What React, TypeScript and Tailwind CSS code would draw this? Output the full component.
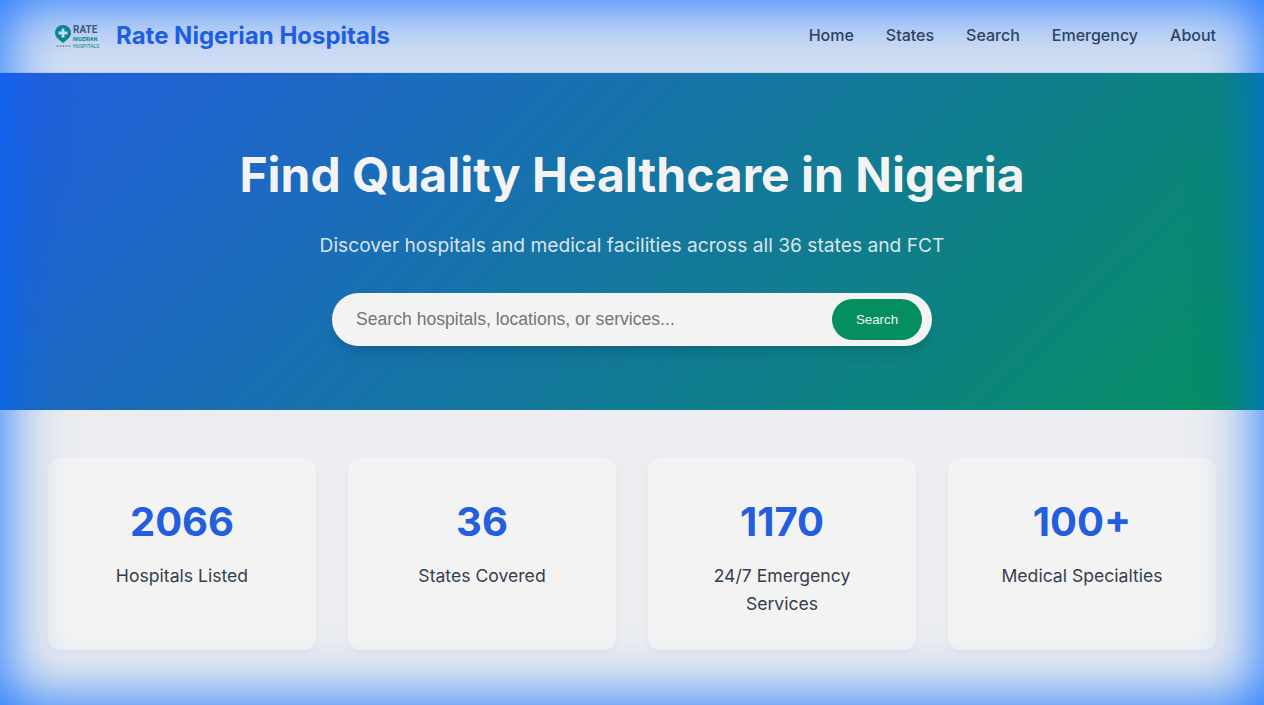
import React from "react";

const navLinks = ["Home", "States", "Search", "Emergency", "About"];

const stats = [
    { value: "2066", label: "Hospitals Listed" },
    { value: "36", label: "States Covered" },
    { value: "1170", label: "24/7 Emergency Services" },
    { value: "100+", label: "Medical Specialties" },
];

const Logo: React.FC = () => (
    <div className="flex w-[46px] items-start gap-[2px] font-['Roboto',sans-serif]">
        <div className="flex w-[16px] shrink-0 flex-col items-center">
            <svg width="16" height="18" viewBox="0 0 16 18" className="shrink-0">
                <path d="M8 0a8 8 0 0 1 8 8c0 3.500-3 6.200-8 10C3 14.200 0 11.500 0 8a8 8 0 0 1 8-8z" fill="#0f8a7a" />
                <path d="M6.600 3.500h2.800v3.100h3.100v2.800H9.400v3.100H6.600V9.400H3.500V6.600h3.100z" fill="#e8eef8" />
            </svg>
            <span className="mt-[2px] text-[3px] leading-[3px] whitespace-nowrap text-[#475569]">★★★★★</span>
        </div>
        <div className="flex flex-col">
            <span className="text-[10px] leading-[10px] font-bold text-[#475569]">RATE</span>
            <span className="mt-[1px] text-[5.300px] leading-[6px] font-bold text-[#0f8a7a]">NIGERIAN</span>
            <span className="mt-[1px] text-[5px] leading-[6px] whitespace-nowrap text-[#0f8a7a]">HOSPITALS</span>
        </div>
    </div>
);

export default function App() {
    return (
        <div className="relative min-h-screen bg-[#ebedf0] font-['Inter',sans-serif]">
            {/* Header */}
            <header className="flex h-[73px] items-center justify-between border-b border-[#c3d3ee] bg-[#d2dff4] px-12">
                <div className="flex items-center gap-[15px]">
                    <div className="ml-[7px] pt-[2px]">
                        <Logo />
                    </div>
                    <span className="text-2xl font-bold text-[#235ede]">Rate Nigerian Hospitals</span>
                </div>
                <nav className="flex items-center gap-8 pb-[2px]">
                    {navLinks.map((link) => (
                        <a key={link} className="font-medium text-[#343e4d]">
                            {link}
                        </a>
                    ))}
                </nav>
            </header>

            {/* Hero */}
            <section className="flex h-[337px] flex-col items-center bg-[linear-gradient(135deg,#235edf,#058f61)] pt-[72px]">
                <h1 className="text-5xl leading-[60px] font-bold text-[#f3f3f4]">Find Quality Healthcare in Nigeria</h1>
                <p className="mt-[26px] text-[19.2px] leading-[28px] text-[#f3f3f4]/90">
                    Discover hospitals and medical facilities across all 36 states and FCT
                </p>
                <div className="mt-[34px] flex h-[53px] w-[600px] items-center rounded-full bg-[#f3f3f4] pr-[10px] pl-6 shadow-lg">
                    <span className="flex-1 font-['Liberation_Sans',sans-serif] text-[17.6px] text-[#757575]">
                        Search hospitals, locations, or services...
                    </span>
                    <button className="h-[41px] w-[90px] rounded-full bg-[#058f61] font-['Liberation_Sans',sans-serif] text-[13.33px] text-[#f3f3f4]">
                        Search
                    </button>
                </div>
            </section>

            {/* Stats */}
            <section className="grid grid-cols-4 gap-8 px-12 py-12">
                {stats.map((stat) => (
                    <div
                        key={stat.label}
                        className="h-[192px] rounded-xl bg-[#f3f3f4] px-8 pt-[34px] text-center shadow-[0_4px_6px_rgba(0,0,0,0.03)]"
                    >
                        <p className="text-[40px] leading-[60px] font-bold text-[#235ede]">{stat.value}</p>
                        <p className="mt-[10px] text-[17.6px] leading-7 text-[#343e4d]">{stat.label}</p>
                    </div>
                ))}
            </section>

            {/* Glow over the whole window */}
            <div className="pointer-events-none fixed inset-0 shadow-[inset_0_0_60px_2px_rgba(0,102,255,0.92)]" />
        </div>
    );
}
